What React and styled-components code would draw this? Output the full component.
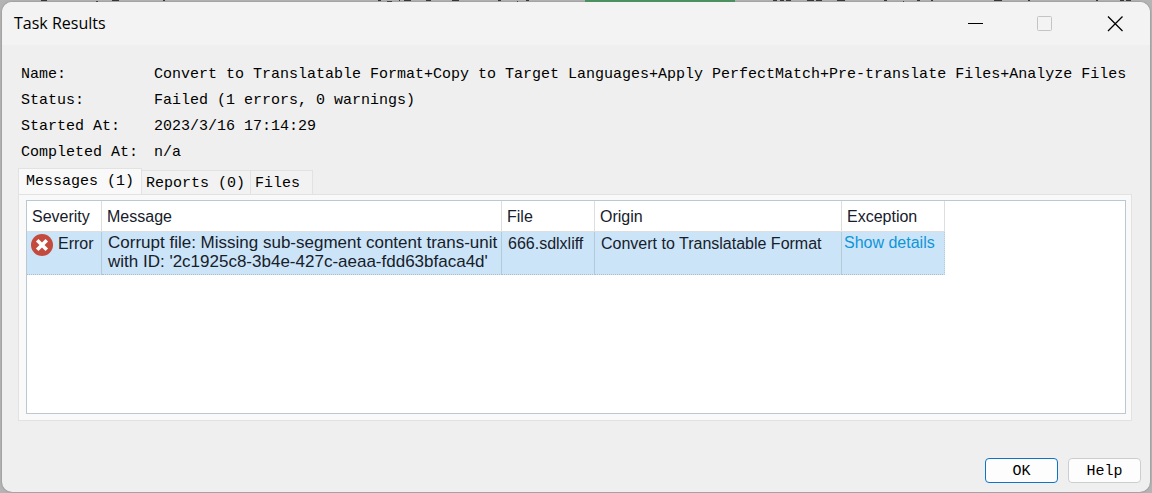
import React from "react";
import styled, { createGlobalStyle } from "styled-components";

const details = [
  { label: "Name:", value: "Convert to Translatable Format+Copy to Target Languages+Apply PerfectMatch+Pre-translate Files+Analyze Files" },
  { label: "Status:", value: "Failed (1 errors, 0 warnings)" },
  { label: "Started At:", value: "2023/3/16 17:14:29" },
  { label: "Completed At:", value: "n/a" },
];

const tabs = ["Messages (1)", "Reports (0)", "Files"];

export default function App() {
  return (
    <>
      <GlobalStyle />
      <Desktop>
        <WindowBehind width="1148" height="2" viewBox="2 0 1148 2" aria-hidden="true">
          <path
            d="M41 0.5h6M96 1.5h2M112 0.5h7M163 0.5h2M378 0.5h3M387 1.5h5M399 0.5h1M404 0.5h7M426 0.5h5M452 0.5h7M498 0.5h3M517 1.5h1M526 0.5h3M773 0.5h4M780 0.5h4M786 0.5h5M807 0.5h7M816 0.5h6M837 0.5h8M884 0.5h3M903 1.5h1M917 0.5h3M931 0.5h2M994 0.5h8M1028 0.5h2M1096 0.5h2M1120 0.5h4M1126 0.5h5"
            stroke="#333"
          />
          <rect x="585" width="150" height="2" fill="#45955c" />
        </WindowBehind>
        <Dialog role="dialog" aria-labelledby="title">
          <TitleBar>
            <Title id="title">Task Results</Title>
            <WindowButton aria-label="Minimize">
              <svg width="16" height="16" viewBox="0 0 16 16">
                <path d="M1 7.5H16" stroke="#000" />
              </svg>
            </WindowButton>
            <WindowButton aria-label="Maximize" disabled>
              <svg width="16" height="16" viewBox="0 0 16 16" fill="none">
                <rect x="0.5" y="0.5" width="14" height="14" rx="1" stroke="#c4c4c4" />
              </svg>
            </WindowButton>
            <WindowButton aria-label="Close">
              <svg width="16" height="16" viewBox="0 0 16 16">
                <path d="M1 0.5L15.5 15M15.5 0.5L1 15" stroke="#000" strokeWidth="1.3" />
              </svg>
            </WindowButton>
          </TitleBar>
          <Content>
            <Details>
              {details.map(({ label, value }) => (
                <React.Fragment key={label}>
                  <dt>{label}</dt>
                  <dd>{value}</dd>
                </React.Fragment>
              ))}
            </Details>
            <TabList role="tablist">
              {tabs.map((tab, index) => (
                <Tab key={tab} role="tab" aria-selected={index === 0} $active={index === 0}>
                  {tab}
                </Tab>
              ))}
            </TabList>
            <TabPanel role="tabpanel">
              <TableArea>
                <Table>
                  <colgroup>
                    <Column $width={75} />
                    <Column $width={400} />
                    <Column $width={93} />
                    <Column $width={247} />
                    <Column $width={103} />
                  </colgroup>
                  <thead>
                    <tr>
                      <th>Severity</th>
                      <th>Message</th>
                      <th>File</th>
                      <th>Origin</th>
                      <th>Exception</th>
                    </tr>
                  </thead>
                  <tbody>
                    <tr>
                      <td>
                        <Severity>
                          <svg width="22" height="22" viewBox="0 0 22 22" aria-hidden="true">
                            <circle cx="11" cy="11" r="11" fill="#c44a3d" />
                            <path d="M6.2 6.2L15.8 15.8M15.8 6.2L6.2 15.8" stroke="#fff" strokeWidth="3.6" />
                          </svg>
                          Error
                        </Severity>
                      </td>
                      <MessageCell>
                        Corrupt file: Missing sub-segment content trans-unit
                        <br />
                        with ID: '2c1925c8-3b4e-427c-aeaa-fdd63bfaca4d'
                      </MessageCell>
                      <td>666.sdlxliff</td>
                      <td>Convert to Translatable Format</td>
                      <LinkCell>
                        <DetailsLink href="#details">Show details</DetailsLink>
                      </LinkCell>
                    </tr>
                  </tbody>
                </Table>
              </TableArea>
            </TabPanel>
            <Actions>
              <Button $primary>OK</Button>
              <Button>Help</Button>
            </Actions>
          </Content>
        </Dialog>
      </Desktop>
    </>
  );
}

const GlobalStyle = createGlobalStyle`
  * {
    box-sizing: border-box;
  }

  body {
    margin: 0;
    background: #b4b4b4;
  }
`;

const Desktop = styled.div`
  min-height: 100vh;
  display: flex;
  flex-direction: column;
  padding: 0 2px 1px;
  background: #b4b4b4;
`;

const WindowBehind = styled.svg`
  display: block;
  flex-shrink: 0;
`;

const Dialog = styled.section`
  flex: 1;
  display: flex;
  flex-direction: column;
  overflow: hidden;
  border-radius: 10px;
  background: #efefef;
  box-shadow: 0 0 2px #777;
  color: #000;
`;

const TitleBar = styled.header`
  height: 43px;
  display: flex;
  background: #f3f3f3;
`;

const Title = styled.h1`
  flex: 1;
  margin: 0;
  padding-left: 12px;
  font: 400 16px/42px "Open Sans", sans-serif;
`;

const WindowButton = styled.button`
  width: 70px;
  padding: 0;
  display: flex;
  align-items: center;
  justify-content: center;
  border: 0;
  background: transparent;
`;

const Content = styled.div`
  flex: 1;
  display: flex;
  flex-direction: column;
  padding: 17px 18px 9px 16px;
  font: 15px/26px "Liberation Mono", monospace;
`;

const Details = styled.dl`
  margin: 0;
  padding-left: 3px;
  display: grid;
  grid-template-columns: 133px 1fr;
  white-space: nowrap;

  dd {
    margin: 0;
  }
`;

const TabList = styled.div`
  height: 28px;
  display: flex;
  align-items: flex-end;
`;

const Tab = styled.button`
  height: ${({ $active }) => ($active ? "27px" : "24px")};
  margin: ${({ $active }) => ($active ? "0 0 -1px" : "0")};
  padding: ${({ $active }) => ($active ? "0 7px 0 7px" : "2px 5px 0 4px")};
  border: 1px solid #e2e2e2;
  border-left-width: ${({ $active }) => ($active ? "1px" : "0")};
  border-bottom: 0;
  background: ${({ $active }) => ($active ? "#f9f9f9" : "#f2f2f2")};
  color: #000;
  font: 15px/22px "Liberation Mono", monospace;

  &:last-child {
    padding-right: 12px;
  }
`;

const TabPanel = styled.div`
  flex: 1;
  display: flex;
  padding: 5px 5px 6px 7px;
  border: 1px solid #e2e2e2;
  background: #f9f9f9;
`;

const TableArea = styled.div`
  flex: 1;
  border: 1px solid #b9c8d2;
  background: #fff;
`;

const Table = styled.table`
  table-layout: fixed;
  width: 918px;
  border-collapse: separate;
  border-spacing: 0;
  color: #16202b;
  font: 16px/19px "Liberation Sans", Arial, sans-serif;

  th {
    height: 31px;
    padding: 0 5px;
    border-right: 1px solid #dedede;
    border-bottom: 1px solid #dedede;
    font-weight: 400;
    text-align: left;
  }

  td {
    height: 43px;
    padding: 2px 0 2px 6px;
    vertical-align: top;
    border-right: 1px solid #b5cad8;
    border-bottom: 1px dotted #a9bfce;
    background: #cce4f7;
    white-space: nowrap;
  }

  td:first-child {
    padding-left: 4px;
  }
`;

const Column = styled.col`
  width: ${({ $width }) => $width}px;
`;

const Severity = styled.span`
  display: flex;
  gap: 5px;
`;

const MessageCell = styled.td`
  && {
    padding-top: 1px;
    font-size: 17px;
  }
`;

const LinkCell = styled.td`
  ${Table} && {
    padding-top: 1px;
    padding-left: 2px;
    border-right-style: dotted;
  }
`;

const DetailsLink = styled.a`
  color: #0d96d9;
  text-decoration: none;
`;

const Actions = styled.footer`
  margin-right: -9px;
  padding-top: 37px;
  display: flex;
  justify-content: flex-end;
  gap: 10px;
`;

const Button = styled.button`
  width: 73px;
  height: 25px;
  padding: 2px 0 0;
  border: 1px solid ${({ $primary }) => ($primary ? "#0f73c6" : "#cdcdcd")};
  border-radius: 4px;
  background: #fdfdfd;
  color: #000;
  font: 15px/21px "Liberation Mono", monospace;
`;
